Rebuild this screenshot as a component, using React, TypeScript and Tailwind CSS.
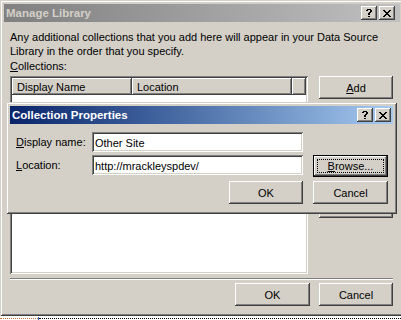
import React from "react";

// classic 3D edges, drawn with inset shadows
const raised =
  "shadow-[inset_-1px_-1px_0_#404040,inset_1px_1px_0_#ffffff,inset_-2px_-2px_0_#808080,inset_2px_2px_0_#d4d0c8]";
const sunken =
  "shadow-[inset_1px_1px_0_#808080,inset_-1px_-1px_0_#ffffff,inset_2px_2px_0_#404040,inset_-2px_-2px_0_#d4d0c8]";
const frame =
  "shadow-[inset_1px_1px_0_#d4d0c8,inset_-1px_-1px_0_#404040,inset_2px_2px_0_#ffffff,inset_-2px_-2px_0_#808080]";

const HELP = [".xxxx.", "xx..xx", "....xx", "...xx.", "..xx..", "..xx..", "......", "..xx.."];
const CLOSE = ["xx....xx", ".xx..xx.", "..xxxx..", "...xx...", "..xxxx..", ".xx..xx.", "xx....xx"];

function Pixels({ rows }: { rows: string[] }) {
  const w = rows[0].length;
  const h = rows.length;
  return (
    <svg width={w} height={h} viewBox={`0 0 ${w} ${h}`} shapeRendering="crispEdges">
      {rows.flatMap((r, y) =>
        r.split("").map((c, x) => (c === "x" ? <rect key={`${x}-${y}`} x={x} y={y} width={1} height={1} fill="#000" /> : null))
      )}
    </svg>
  );
}

function CaptionButtons() {
  return (
    <div className="flex gap-[2px]">
      <div className={`w-[16px] h-[14px] bg-[#d4d0c8] flex items-center justify-center ${raised}`}>
        <Pixels rows={HELP} />
      </div>
      <div className={`w-[16px] h-[14px] bg-[#d4d0c8] flex items-center justify-center ${raised}`}>
        <Pixels rows={CLOSE} />
      </div>
    </div>
  );
}

function Button({ children, className = "" }: { children?: React.ReactNode; className?: string }) {
  return (
    <div className={`h-[23px] bg-[#d4d0c8] flex items-center justify-center text-black ${raised} ${className}`}>
      {children}
    </div>
  );
}

function Field({ value }: { value: string }) {
  return (
    <div className={`w-[211px] h-[20px] bg-white flex items-center pl-[3px] pt-[1px] ${sunken}`}>{value}</div>
  );
}

function CollectionProperties() {
  return (
    <div className={`absolute left-[6px] top-[102px] w-[391px] h-[112px] bg-[#d4d0c8] p-[4px] ${frame}`}>
      <div className="h-[18px] bg-linear-to-r from-[#0a246a] to-[#a6caf0] flex items-center justify-between pl-[2px] pr-[2px]">
        <span className="font-bold text-[11.5px] text-white">Collection Properties</span>
        <CaptionButtons />
      </div>
      <div className="pl-[6px] pr-[5px] pt-[8px]">
        <div className="flex items-center">
          <span className="w-[76px]">
            <span className="underline">D</span>isplay name:
          </span>
          <Field value="Other Site" />
        </div>
        <div className="flex items-start mt-[3px]">
          <span className="w-[76px] h-[20px] flex items-center">
            <span className="underline">L</span>ocation:
          </span>
          <Field value="http://mrackleyspdev/" />
          <div className={`ml-[10px] w-[75px] h-[22px] bg-[#d4d0c8] border border-black p-[3px] flex ${raised}`}>
            <div className="flex-1 border border-dotted border-black flex items-center justify-center">
              <span>
                <span className="underline">B</span>rowse...
              </span>
            </div>
          </div>
        </div>
        <div className="flex justify-end gap-[10px] mt-[4px]">
          <Button className="w-[74px]">OK</Button>
          <Button className="w-[75px]">Cancel</Button>
        </div>
      </div>
    </div>
  );
}

export default function App() {
  return (
    <div className="relative w-[401px] h-[320px] overflow-hidden bg-white font-['Liberation_Sans',Arial,sans-serif] text-[11px] leading-[14px] text-black">
      <div className={`w-[404px] h-[316px] bg-[#d4d0c8] p-[4px] flex flex-col ${frame}`}>
        <div className="h-[18px] bg-linear-to-r from-[#808080] to-[#c0c0c0] flex items-center justify-between pl-[2px] pr-[5px]">
          <span className="font-bold text-[11.5px] text-[#d4d0c8]">Manage Library</span>
          <CaptionButtons />
        </div>
        <div className="flex flex-col pl-[6px] pr-[7px] pt-[8px]">
          <p>
            Any additional collections that you add here will appear in your Data Source
            <br />
            Library in the order that you specify.
          </p>
          <p className="mt-[1px]">
            <span className="underline">C</span>ollections:
          </p>
          <div className="flex mt-[3px]">
            <div className={`w-[298px] h-[198px] bg-white p-[2px] ${sunken}`}>
              <div className="flex h-[17px]">
                <div className={`w-[120px] bg-[#d4d0c8] flex items-center pl-[5px] ${raised}`}>Display Name</div>
                <div className={`w-[160px] bg-[#d4d0c8] flex items-center pl-[5px] ${raised}`}>Location</div>
                <div className={`flex-1 bg-[#d4d0c8] ${raised}`} />
              </div>
            </div>
            <div className="ml-[11px] w-[74px] flex flex-col">
              <Button className="h-[22px]">
                <span>
                  <span className="underline">A</span>dd
                </span>
              </Button>
              <Button className="mt-[6px]">Modify...</Button>
              <Button className="mt-[67px]">Remove</Button>
            </div>
          </div>
          <div className="mt-[4px] h-[2px] border-t border-[#808080] border-b border-b-white" />
          <div className="flex justify-end gap-[9px] mt-[3px]">
            <Button className="w-[75px]">OK</Button>
            <Button className="w-[74px]">Cancel</Button>
          </div>
        </div>
      </div>
      <div className="mt-[2px] flex items-start">
        <div className="w-[38px] border-t border-dotted border-[#c0703a]" />
        <div className="w-[1px] h-[3px] -mt-[1px] bg-[#3060c0]" />
        <div className="flex-1 border-t border-dotted border-black" />
      </div>
      <CollectionProperties />
    </div>
  );
}
